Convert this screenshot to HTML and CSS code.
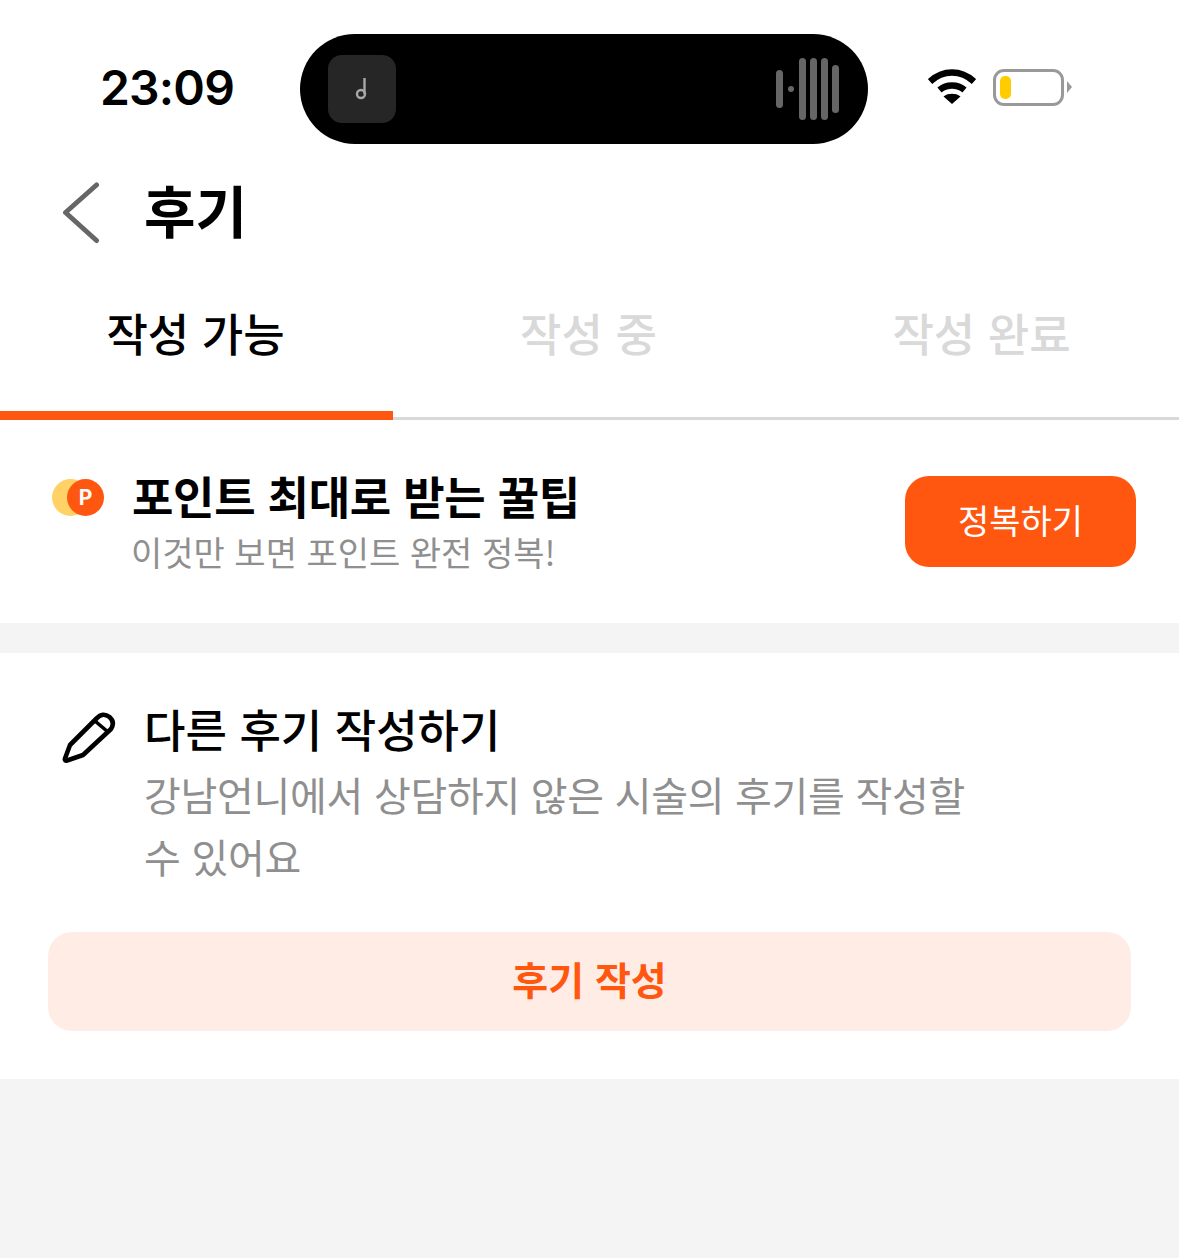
FILE: index.html
```html
<!DOCTYPE html>
<html lang="ko">
<head>
  <meta charset="UTF-8" />
  <meta name="viewport" content="width=device-width, initial-scale=1.0"/>
  <title>후기</title>
  <link rel="stylesheet" href="styles.css">
</head>
<body>
  <div class="status-bar">
    <span class="time">23:09</span>
    <div class="island">
      <div class="album">
        <svg width="14" height="24" viewBox="0 0 14 24"><path d="M9.5 1V17" stroke="#a8a8a8" stroke-width="2.4" fill="none"/><circle cx="6" cy="17" r="4" stroke="#a8a8a8" stroke-width="2.4" fill="none"/></svg>
      </div>
      <div class="wave">
        <i class="b1"></i><i class="b2"></i><i class="b3"></i><i class="b3"></i><i class="b3"></i><i class="b4"></i>
      </div>
    </div>
    <div class="status-icons">
      <svg class="wifi" width="48" height="36" viewBox="0 0 48 36">
        <path d="M2 12.5C8 7 15.500 3.500 24 3.500S40 7 46 12.500" stroke="#000" stroke-width="6.500" fill="none"/>
        <path d="M11.500 21C15 18 19 16.500 24 16.500S33 18 36.500 21" stroke="#000" stroke-width="6.500" fill="none"/>
        <path d="M15.500 27.500C18 25.500 21 24.800 24 24.800S30 25.500 32.500 27.500L24 35Z" fill="#000"/>
      </svg>
      <div class="battery"><span class="level"></span></div>
      <span class="battery-tip"></span>
    </div>
  </div>

  <header class="nav">
    <svg class="back" width="40" height="62" viewBox="0 0 40 62"><path d="M35.500 3L4.500 30.500L35.500 58.500" stroke="#666" stroke-width="5" stroke-linecap="round" stroke-linejoin="round" fill="none"/></svg>
    <h1>후기</h1>
  </header>

  <nav class="tabs">
    <div class="tab active">작성 가능</div>
    <div class="tab">작성 중</div>
    <div class="tab">작성 완료</div>
  </nav>

  <section class="tip">
    <div class="coin">
      <span class="coin-back"></span>
      <span class="coin-front">P</span>
    </div>
    <div class="tip-text">
      <strong>포인트 최대로 받는 꿀팁</strong>
      <p>이것만 보면 포인트 완전 정복!</p>
    </div>
    <button class="tip-btn">정복하기</button>
  </section>

  <section class="write">
    <div class="write-row">
      <svg class="pencil" width="54" height="54" viewBox="0 0 54 54">
        <path d="M8 34L35 7C38 3.500 43 2.500 47.500 6C51.500 9.500 51.500 14 49 18L21 44L5 49.500C3.500 50 2.500 49 3 47.500Z" stroke="#000" stroke-width="4.600" stroke-linejoin="round" fill="none"/>
        <path d="M33 10L46 21" stroke="#000" stroke-width="3.600" fill="none"/>
      </svg>
      <div class="write-text">
        <h2>다른 후기 작성하기</h2>
        <p>강남언니에서 상담하지 않은 시술의 후기를 작성할 수 있어요</p>
      </div>
    </div>
    <button class="write-btn">후기 작성</button>
  </section>
</body>
</html>
```

FILE: styles.css
```css
* {
  box-sizing: border-box;
}
body {
  margin: 0;
  height: 1258px;
  overflow: hidden;
  background-color: #f4f4f4;
  font-family: "Noto Sans CJK KR", "Noto Sans", sans-serif;
  color: #000;
}

/* status bar */
.status-bar {
  height: 154px;
  padding: 34px 0 10px 100px;
  display: flex;
  align-items: center;
  background-color: #fff;
}
.time {
  width: 200px;
  padding-bottom: 4px;
  font-family: Inter, sans-serif;
  font-size: 48px;
  font-weight: 600;
  letter-spacing: -0.8px;
}
.island {
  width: 568px;
  height: 110px;
  padding: 0 29px 0 28px;
  border-radius: 55px;
  background-color: #000;
  display: flex;
  align-items: center;
  justify-content: space-between;
}
.album {
  width: 68px;
  height: 68px;
  border-radius: 14px;
  background-color: #262626;
  display: flex;
  align-items: center;
  justify-content: center;
}
.wave {
  display: flex;
  align-items: center;
  gap: 4px;
}
.wave i {
  display: block;
  width: 7px;
  border-radius: 4px;
  background-color: #666;
}
.wave .b1 { height: 38px; margin-right: 1px; }
.wave .b2 { width: 6px; height: 6px; margin-right: 1px; }
.wave .b3 { height: 62px; }
.wave .b4 { height: 48px; }
.status-icons {
  margin: 0 0 4px 60px;
  display: flex;
  align-items: center;
}
.wifi {
  margin-right: 17px;
}
.battery {
  width: 71px;
  height: 37px;
  padding: 4px;
  border: 3px solid #999;
  border-radius: 11px;
}
.level {
  display: block;
  width: 11px;
  height: 100%;
  border-radius: 5px;
  background-color: #ffcc00;
}
.battery-tip {
  margin-left: 3px;
  border-left: 5px solid #999;
  border-top: 6px solid transparent;
  border-bottom: 6px solid transparent;
}

/* header */
.nav {
  height: 110px;
  padding: 8px 0 0 61px;
  display: flex;
  align-items: center;
  background-color: #fff;
}
.back {
  margin-right: 43px;
}
.nav h1 {
  margin: -8px 0 0;
  font-size: 56px;
  font-weight: 700;
  line-height: 1;
}

/* tabs */
.tabs {
  display: flex;
  height: 156px;
  background-color: #fff;
  border-bottom: 3px solid #d9d9d9;
}
.tab {
  flex: 1;
  padding-top: 39px;
  text-align: center;
  text-indent: -2px;
  font-size: 45px;
  font-weight: 500;
  line-height: 60px;
  color: #d9d9d9;
}
.tab.active {
  height: 156px;
  border-bottom: 9px solid #ff5610;
  color: #000;
}

/* point tip */
.tip {
  height: 203px;
  padding: 0 43px 0 52px;
  display: flex;
  align-items: center;
  background-color: #fff;
}
.coin {
  position: relative;
  align-self: flex-start;
  flex-shrink: 0;
  width: 52px;
  height: 37px;
  margin: 59px 28px 0 0;
}
.coin-back {
  position: absolute;
  left: 0;
  top: 0;
  width: 37px;
  height: 37px;
  border-radius: 50%;
  background-color: #ffd166;
}
.coin-front {
  position: absolute;
  right: 0;
  top: 0;
  width: 37px;
  height: 37px;
  border-radius: 50%;
  background-color: #ff5610;
  color: #fff;
  font-family: Inter, sans-serif;
  font-size: 21px;
  font-weight: 700;
  line-height: 37px;
  text-align: center;
}
.tip-text {
  flex: 1;
}
.tip-text strong {
  display: block;
  font-size: 45px;
  font-weight: 700;
  letter-spacing: -0.3px;
  line-height: 56px;
}
.tip-text p {
  margin: 0 0 -2px -1px;
  padding-top: 2px;
  font-size: 34px;
  line-height: 52px;
  color: #8f8f8f;
}
.tip-btn {
  width: 231px;
  height: 91px;
  padding: 0 0 4px;
  border: 0;
  border-radius: 24px;
  background-color: #ff5610;
  color: #fff;
  font-family: inherit;
  font-size: 34px;
}

/* write review */
.write {
  margin-top: 30px;
  height: 426px;
  padding: 46px 48px 0;
  background-color: #fff;
}
.write-row {
  display: flex;
  padding-left: 14px;
}
.pencil {
  margin: 12px 28px 0 0;
  flex-shrink: 0;
}
.write-text {
  width: 840px;
}
.write-text h2 {
  margin: 0;
  font-size: 45px;
  font-weight: 500;
  line-height: 60px;
}
.write-text p {
  margin: 4px 0 0;
  font-size: 40px;
  letter-spacing: -0.3px;
  line-height: 62px;
  color: #8f8f8f;
}
.write-btn {
  display: block;
  width: 1083px;
  height: 99px;
  margin-top: 45px;
  padding: 0 0 8px;
  border: 0;
  border-radius: 24px;
  background-color: #ffede5;
  color: #ff5610;
  font-family: inherit;
  font-size: 39px;
  font-weight: 700;
}
```
